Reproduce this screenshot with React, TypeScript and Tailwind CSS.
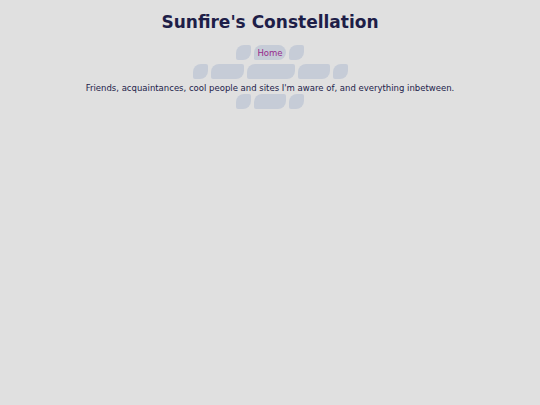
import React from 'react';

// Tile shapes for the little "constellation" nav
const tile = "h-[15px] bg-[#c6ccd7] rounded-tl-[8px] rounded-br-[8px] rounded-tr-[2px] rounded-bl-[2px]";

const Row = ({ widths, home }: { widths: number[]; home?: number }) => (
    <div className="flex justify-center gap-[3px]">
        {widths.map((w, i) => (
            <div
                key={i}
                className={`${tile} ${i === home ? 'bg-[#b7bed0] rounded-tl-[4px] rounded-tr-[8px] rounded-br-[2px] flex items-center justify-center pt-[2px]' : ''}`}
                style={{ width: w }}
            >
                {i === home && <span className="text-[8.5px] text-[#962a8c] leading-none">Home</span>}
            </div>
        ))}
    </div>
);

const App: React.FC = () => {
    return (
        <div className="min-h-[405px] w-full bg-[#e0e0e0] font-['DejaVu_Sans',Verdana,sans-serif] text-[#22224a]">
            <h1 className="pt-[11px] text-center text-[17px] font-bold leading-[22px] text-[#1e1e48]">Sunfire's Constellation</h1>
            <div className="mt-[12px] flex flex-col gap-[4px]">
                <Row widths={[15, 32, 15]} home={1} />
                <Row widths={[15, 33, 48, 32, 15]} />
            </div>
            <p className="mt-[3px] text-center text-[8.5px] leading-[12px]">
                Friends, acquaintances, cool people and sites I'm aware of, and everything inbetween.
            </p>
            <div>
                <Row widths={[15, 32, 15]} />
            </div>
        </div>
    );
};

export default App;
